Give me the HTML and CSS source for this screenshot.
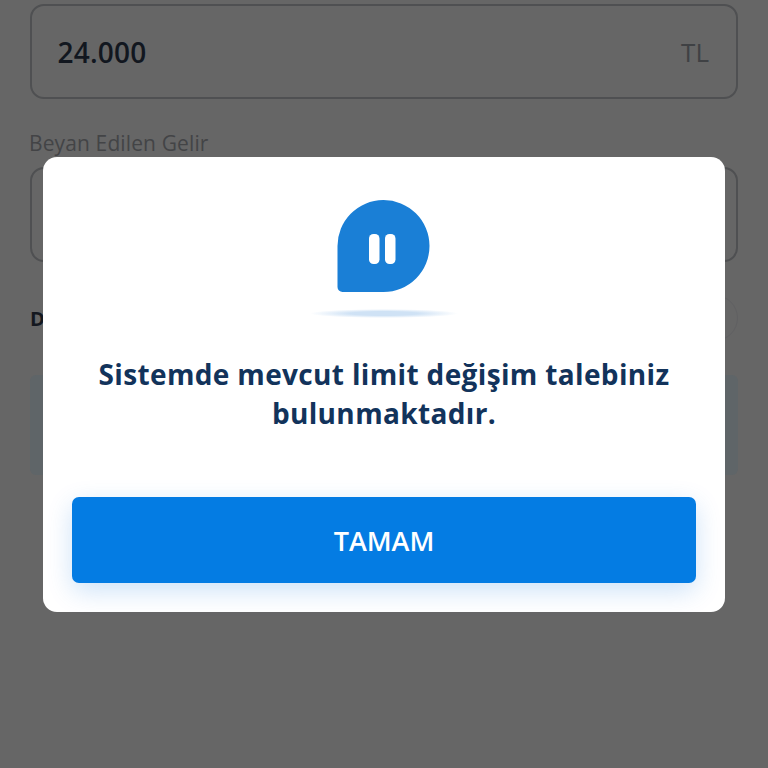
FILE: index.html
```html
<!DOCTYPE html>
<html lang="tr">
<head>
<meta charset="utf-8">
<title>Limit</title>
<link rel="stylesheet" href="styles.css">
</head>
<body>
<main class="page">
  <div class="field">
    <span class="value">24.000</span>
    <span class="unit">TL</span>
  </div>
  <div class="label">Beyan Edilen Gelir</div>
  <div class="field"></div>
  <div class="row">
    <span class="row-title">Dönem</span>
    <span class="toggle"></span>
  </div>
  <div class="panel"></div>
</main>
<div class="overlay">
  <section class="modal">
    <svg class="icon" width="148" height="120" viewBox="0 0 148 120" aria-hidden="true">
      <defs>
        <radialGradient id="shadow">
          <stop offset="0.45" stop-color="#cfe2f5"/>
          <stop offset="1" stop-color="#ffffff"/>
        </radialGradient>
      </defs>
      <path d="M27.500 46.500a46 46 0 1 1 46 45.500H32.500a5 5 0 0 1-5-5z" fill="#1a7fd6"/>
      <rect x="59" y="34" width="10.500" height="30" rx="4.500" fill="#fff"/>
      <rect x="75" y="34" width="10.500" height="30" rx="4.500" fill="#fff"/>
      <ellipse cx="74" cy="113.500" rx="74" ry="4.500" fill="url(#shadow)"/>
    </svg>
    <h1 class="message">Sistemde mevcut limit değişim talebiniz bulunmaktadır.</h1>
    <button class="ok" type="button">TAMAM</button>
  </section>
</div>
</body>
</html>
```
FILE: styles.css
```css
* { box-sizing: border-box; }
html, body { margin: 0; height: 100%; }
body {
  background: #666666;
  font-family: "Open Sans", "Noto Sans", sans-serif;
  overflow: hidden;
}
.page {
  display: flex;
  flex-direction: column;
  padding: 4px 30px 0;
}
.field {
  height: 95px;
  border: 2.5px solid #4f5052;
  border-radius: 14px;
  padding: 0 27px 0 25.500px;
  display: flex;
  align-items: center;
  justify-content: space-between;
}
.value { font-size: 28px; font-weight: 600; color: #12171f; letter-spacing: 0.2px; }
.unit { font-size: 26px; font-weight: 500; color: #3f4144; }
.label {
  margin: 30px 0 9px -1px;
  height: 29px;
  line-height: 29px;
  font-size: 21px;
  letter-spacing: 0.12px;
  color: #434446;
}
.row {
  height: 112px;
  display: flex;
  align-items: center;
  justify-content: space-between;
  margin-bottom: 1px;
}
.row-title { font-size: 20px; font-weight: 700; color: #14181f; }
.toggle {
  width: 46px;
  height: 46px;
  border-radius: 50%;
  border: 1px solid #606062;
}
.panel {
  height: 100px;
  border-radius: 6px;
  background: #5f6568;
}
.overlay {
  position: absolute;
  inset: 0;
}
.modal {
  position: absolute;
  left: 43px;
  top: 157px;
  width: 682px;
  height: 455px;
  background: #fff;
  border-radius: 14px;
  padding: 43px 29px 0;
  display: flex;
  flex-direction: column;
  align-items: center;
}
.icon { display: block; flex: none; }
.message {
  margin: 35px 0 0;
  width: 620px;
  font-size: 28px;
  line-height: 39px;
  font-weight: 700;
  color: #12335b;
  text-align: center;
  letter-spacing: 0.35px;
}
.ok {
  margin-top: 64px;
  width: 100%;
  height: 86px;
  flex: none;
  border: 0;
  border-radius: 7px;
  background: #047ce3;
  color: #fff;
  font-family: inherit;
  font-size: 27px;
  font-weight: 600;
  box-shadow: 0 8px 26px rgba(4, 110, 220, 0.2);
}
```
